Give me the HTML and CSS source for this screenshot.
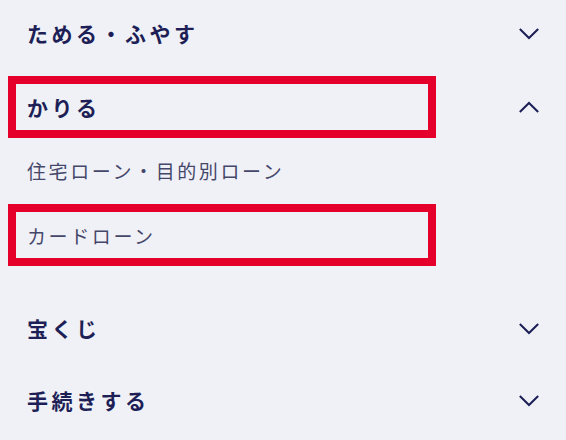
FILE: index.html
```html
<!DOCTYPE html>
<html lang="ja">
<head>
<meta charset="utf-8">
<link rel="stylesheet" href="styles.css">
</head>
<body>
<nav class="nav">
  <div class="row first">
    <div class="label">ためる・ふやす</div>
    <svg class="chev" viewBox="0 0 24 14"><polyline points="2,2 12,12 22,2"/></svg>
  </div>
  <div class="row">
    <div class="label mark">かりる</div>
    <svg class="chev" viewBox="0 0 24 14"><polyline points="2,12 12,2 22,12"/></svg>
  </div>
  <ul class="sub">
    <li class="sub-item">住宅ローン・目的別ローン</li>
    <li class="sub-item mark">カードローン</li>
  </ul>
  <div class="row">
    <div class="label">宝くじ</div>
    <svg class="chev" viewBox="0 0 24 14"><polyline points="2,2 12,12 22,2"/></svg>
  </div>
  <div class="row">
    <div class="label">手続きする</div>
    <svg class="chev" viewBox="0 0 24 14"><polyline points="2,2 12,12 22,2"/></svg>
  </div>
</nav>
</body>
</html>
```
FILE: styles.css
```css
html, body {
  margin: 0;
  padding: 0;
  background: #f0f1f7;
}
body {
  font-family: "Noto Sans CJK JP", "Noto Sans", sans-serif;
  color: #1d1f56;
  overflow: hidden;
}
.nav {
  padding: 0 26px 0 8px;
}
.row {
  display: flex;
  align-items: center;
  justify-content: space-between;
  height: 72px;
}
.row.first {
  margin-top: -4px;
  height: 75px;
}
.label {
  box-sizing: border-box;
  width: 428px;
  height: 62px;
  border: 8px solid transparent;
  padding-left: 11px;
  display: flex;
  align-items: center;
  font-size: 21px;
  line-height: 1;
  font-weight: 700;
  letter-spacing: 3.5px;
}
.mark {
  border-color: #e4002b;
}
.chev {
  width: 22px;
  height: 13px;
  fill: none;
  stroke: #1d1f56;
  stroke-width: 2.2;
}
.sub {
  list-style: none;
  margin: 0;
  padding: 0 0 26px 0;
}
.sub-item {
  box-sizing: border-box;
  width: 428px;
  height: 54px;
  border: 8px solid transparent;
  padding-left: 11px;
  display: flex;
  align-items: center;
  font-size: 19px;
  line-height: 1;
  font-weight: 400;
  letter-spacing: 2.6px;
  color: #45476a;
}
.sub-item.mark {
  height: 62px;
  margin-top: 7px;
  border-color: #e4002b;
}
```
